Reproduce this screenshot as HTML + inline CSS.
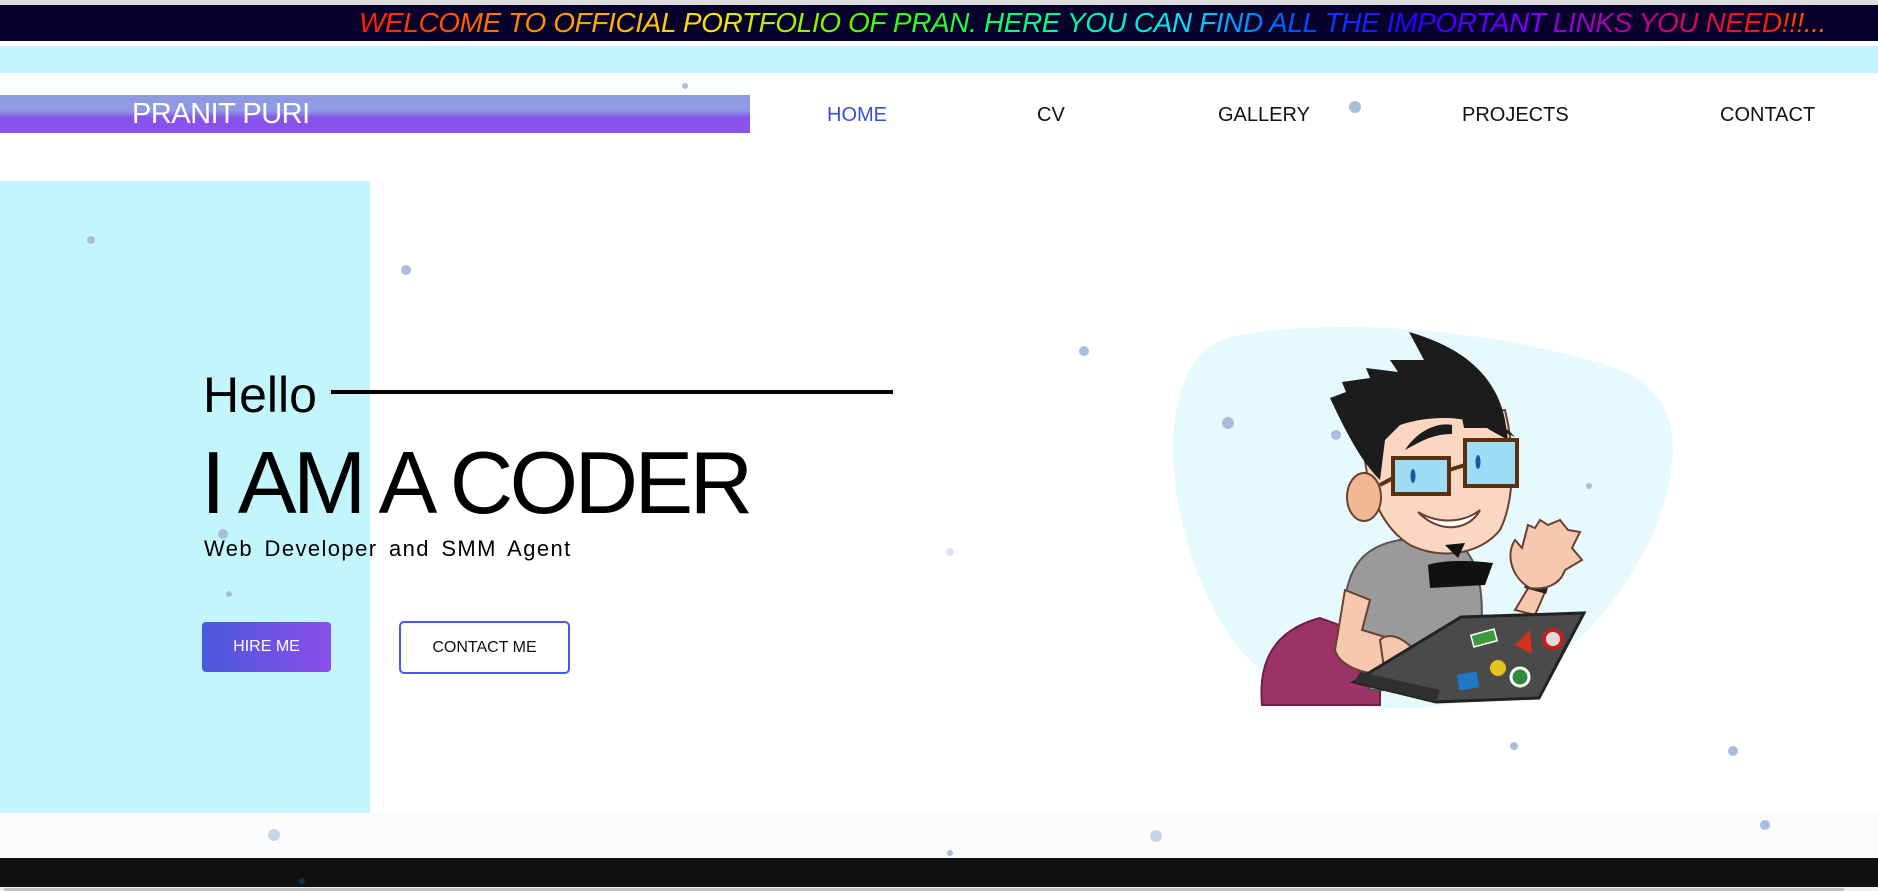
<!DOCTYPE html>
<html><head><meta charset="utf-8"><style>
*{margin:0;padding:0;box-sizing:border-box}
html,body{width:1878px;height:891px;overflow:hidden;background:#fff;font-family:"Liberation Sans",sans-serif}
.abs{position:absolute}
#topline{left:0;top:0;width:1878px;height:5px;background:#dcdcdc}
#marq{left:0;top:5px;width:1878px;height:36px;background:#06002a}
#marq span{position:absolute;left:359px;top:2px;font-size:28px;font-style:italic;white-space:nowrap;letter-spacing:-0.4px;
background:linear-gradient(90deg,#ff1a00 0%,#ff8c00 12%,#ffe600 24%,#38ff00 36%,#00ff80 46%,#00e5ff 56%,#0050ff 64%,#2a00ff 72%,#8000ff 80%,#c0008a 88%,#ff1a00 96%,#ff6a00 100%);
-webkit-background-clip:text;background-clip:text;color:transparent}
#cyan{left:0;top:46px;width:1878px;height:27px;background:#c3f5fd}
#logo{left:0;top:95px;width:750px;height:38px;background:linear-gradient(#8e9be3 0%,#8e9be3 40%,#8753ea 60%,#8753ea 100%)}
#logo span{position:absolute;left:132px;top:3px;color:#fff;font-size:29px;letter-spacing:-0.5px}
.nav{top:104px;font-size:20px;color:#111;white-space:nowrap}
#panel{left:0;top:181px;width:370px;height:632px;background:#c3f5fd}
#hello{left:203px;top:366px;font-size:50px;color:#000}
#hline{left:331px;top:390px;width:562px;height:4px;background:#000}
#coder{left:201px;top:432px;font-size:88px;color:#000;letter-spacing:-3.6px;white-space:nowrap}
#sub{left:204px;top:536px;font-size:22px;color:#000;letter-spacing:1.4px;word-spacing:4px;white-space:nowrap}
#hire{left:202px;top:622px;width:129px;height:50px;border-radius:4px;background:linear-gradient(90deg,#4a57dd,#8a4fe8);color:#fff;font-size:16px;text-align:center;line-height:50px}
#contact{left:399px;top:621px;width:171px;height:53px;border:2px solid #4a5be0;border-radius:5px;color:#111;font-size:16px;text-align:center;line-height:49px}
#band{left:0;top:813px;width:1878px;height:45px;background:#fbfbfb}
#foot{left:0;top:858px;width:1878px;height:29px;background:#111}
#sb{left:0;top:887px;width:1878px;height:4px;background:#f0f0f0}
#sb div{position:absolute;left:4px;top:1px;width:1840px;height:3px;background:#c1c1c1}
</style></head><body>
<div id="topline" class="abs"></div>
<div id="marq" class="abs"><span>WELCOME TO OFFICIAL PORTFOLIO OF PRAN. HERE YOU CAN FIND ALL THE IMPORTANT LINKS YOU NEED!!!...</span></div>
<div id="cyan" class="abs"></div>
<div id="logo" class="abs"><span>PRANIT PURI</span></div>
<div class="abs nav" style="left:827px;color:#3a4fd8">HOME</div>
<div class="abs nav" style="left:1037px">CV</div>
<div class="abs nav" style="left:1218px">GALLERY</div>
<div class="abs nav" style="left:1462px">PROJECTS</div>
<div class="abs nav" style="left:1720px">CONTACT</div>
<div id="panel" class="abs"></div>
<div id="band" class="abs"></div>
<div id="foot" class="abs"></div>
<div id="sb" class="abs"><div></div></div>
<svg class="abs" style="left:0;top:0" width="1878" height="891" viewBox="0 0 1878 891">
<path d="M1240 335 C1360 315 1520 335 1620 370 C1690 400 1680 470 1650 540 C1610 620 1540 700 1420 708 C1320 712 1260 690 1220 620 C1180 550 1168 470 1175 420 C1182 370 1200 342 1240 335 Z" fill="#e6f9fd"/>
<path d="M1262 705 C1258 660 1275 630 1320 618 L1380 640 L1380 705 Z" fill="#9b3368" stroke="#6e1f48" stroke-width="2"/>
<path d="M1345 600 C1350 560 1370 545 1400 540 L1460 545 C1480 560 1485 600 1480 640 L1460 690 L1370 690 Z" fill="#9a9a9a" stroke="#555" stroke-width="2"/>
<path d="M1345 590 L1335 650 C1340 670 1380 680 1400 670 L1395 640 L1362 630 L1370 600 Z" fill="#f6c8b0" stroke="#6a4030" stroke-width="2"/>
<path d="M1380 640 C1390 630 1410 640 1420 660 L1410 680 L1385 675 Z" fill="#f6c8b0" stroke="#6a4030" stroke-width="2"/>
<path d="M1515 610 L1530 585 L1545 592 L1535 615 Z" fill="#f6c8b0" stroke="#6a4030" stroke-width="2"/>
<path d="M1525 585 l22 6" stroke="#222" stroke-width="6"/>
<path d="M1530 588 C1512 578 1505 555 1515 540 L1522 548 L1528 525 L1535 528 L1540 520 L1548 525 L1560 520 L1568 530 L1580 532 L1572 548 L1582 560 L1565 570 C1560 585 1545 590 1530 588 Z" fill="#f6c8b0" stroke="#6a4030" stroke-width="2"/>
<path d="M1354 682 L1461 617 L1584 613 L1539 698 L1436 702 Z" fill="#4a4a4a" stroke="#222" stroke-width="3"/>
<path d="M1354 682 L1436 702 L1440 690 L1360 672 Z" fill="#2f2f2f"/>
<rect x="1472" y="632" width="24" height="12" fill="#3b9a3b" stroke="#fff" stroke-width="1.5" transform="rotate(-15 1484 638)"/>
<path d="M1515 645 L1530 630 L1532 654 Z" fill="#d6301e"/>
<circle cx="1553" cy="639" r="9" fill="#ddd" stroke="#c81e1e" stroke-width="4"/>
<circle cx="1498" cy="668" r="8" fill="#e6c21e"/>
<circle cx="1520" cy="677" r="9" fill="#2d8a3a" stroke="#fff" stroke-width="3"/>
<rect x="1458" y="673" width="20" height="16" fill="#1e78c8" transform="rotate(-10 1468 681)"/>
<path d="M1365 420 C1360 460 1370 520 1410 545 C1440 560 1480 555 1500 530 C1515 500 1515 450 1505 410 Z" fill="#fbd6c0" stroke="#6a4030" stroke-width="2"/>
<ellipse cx="1364" cy="497" rx="17" ry="24" fill="#f1b893" stroke="#6a4030" stroke-width="2"/>
<path d="M1330 398 L1346 392 L1342 382 L1370 378 L1366 368 L1398 372 L1390 360 L1424 360 L1409 332 C1455 345 1495 370 1505 420 L1508 440 L1490 430 C1470 415 1430 415 1400 425 L1385 440 L1380 480 C1360 460 1345 430 1330 398 Z" fill="#1c1c1c"/>
<path d="M1405 450 C1418 430 1438 422 1452 425 L1452 434 C1432 434 1420 442 1405 450 Z" fill="#1c1c1c"/>
<path d="M1462 418 C1485 415 1505 425 1515 437 L1495 428 L1464 428 Z" fill="#1c1c1c"/>
<rect x="1393" y="458" width="56" height="36" fill="#9fdcf5" stroke="#5a3010" stroke-width="4"/>
<rect x="1465" y="440" width="52" height="46" fill="#9fdcf5" stroke="#5a3010" stroke-width="4"/>
<path d="M1449 470 L1465 465 M1380 485 L1393 478" stroke="#5a3010" stroke-width="4"/>
<ellipse cx="1413" cy="476" rx="2.5" ry="7" fill="#1a5a99"/>
<ellipse cx="1478" cy="462" rx="2.5" ry="7" fill="#1a5a99"/>
<path d="M1418 512 C1440 525 1465 522 1480 510 C1470 530 1440 535 1418 512 Z" fill="#fff" stroke="#6a4030" stroke-width="2"/>
<path d="M1428 565 C1440 560 1470 560 1493 563 L1485 585 L1430 588 Z" fill="#111"/>
<path d="M1445 545 L1465 543 L1458 558 Z" fill="#111"/>
<g fill="#a9bedf">
<circle cx="685" cy="86" r="3"/><circle cx="1355" cy="107" r="6"/><circle cx="91" cy="240" r="4"/><circle cx="406" cy="270" r="5"/>
<circle cx="1084" cy="351" r="5"/><circle cx="1228" cy="423" r="6"/><circle cx="1336" cy="435" r="5"/><circle cx="1589" cy="486" r="3"/>
<circle cx="223" cy="534" r="5"/><circle cx="229" cy="594" r="3"/><circle cx="950" cy="552" r="4" fill="#dbe5f1"/><circle cx="1514" cy="746" r="4"/>
<circle cx="1733" cy="751" r="5"/><circle cx="274" cy="835" r="6" fill="#c6d6ea"/><circle cx="1156" cy="836" r="6" fill="#c6d6ea"/><circle cx="1765" cy="825" r="5"/>
<circle cx="950" cy="853" r="3"/><circle cx="302" cy="881" r="3" fill="#1a2a4a"/>
</g>
</svg>
<div id="hello" class="abs">Hello</div>
<div id="hline" class="abs"></div>
<div id="coder" class="abs">I AM A CODER</div>
<div id="sub" class="abs">Web Developer and SMM Agent</div>
<div id="hire" class="abs">HIRE ME</div>
<div id="contact" class="abs">CONTACT ME</div>
</body></html>
